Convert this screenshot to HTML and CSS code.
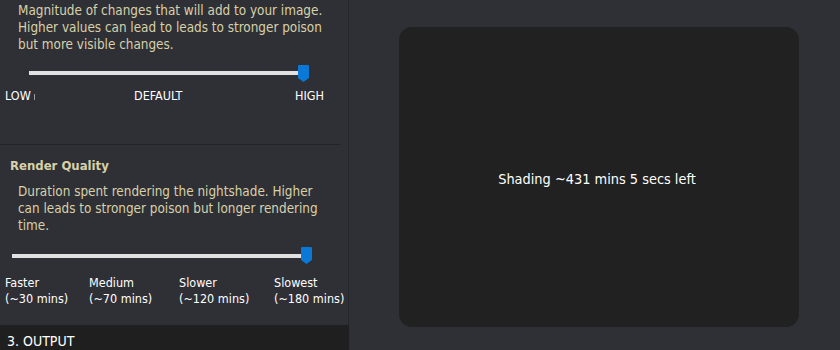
FILE: index.html
```html
<!DOCTYPE html>
<html>
<head>
    <title>Nightshade - Shading</title>
    <link rel="stylesheet" href="styles.css">
</head>
<body>
    <div class="app">
        <div class="side">
            <div class="panel">
                <div class="section intensity">
                    <p class="desc">Magnitude of changes that will add to your image. Higher values can lead to leads to stronger poison but more visible changes.</p>
                    <div class="slider slider-intensity">
                        <div class="track"></div>
                        <svg class="thumb" width="11" height="17" viewBox="0 0 11 17"><path d="M1 0H10Q11 0 11 1V13L5.5 17L0 13V1Q0 0 1 0Z" fill="#0a78d6"/></svg>
                    </div>
                    <div class="marks marks-intensity">
                        <span>LOW<i class="tick"></i></span>
                        <span>DEFAULT</span>
                        <span>HIGH</span>
                    </div>
                </div>
                <div class="section quality">
                    <h3>Render Quality</h3>
                    <p class="desc">Duration spent rendering the nightshade. Higher can leads to stronger poison but longer rendering time.</p>
                    <div class="slider slider-quality">
                        <div class="track"></div>
                        <svg class="thumb" width="11" height="17" viewBox="0 0 11 17"><path d="M1 0H10Q11 0 11 1V13L5.5 17L0 13V1Q0 0 1 0Z" fill="#0a78d6"/></svg>
                    </div>
                    <div class="marks marks-quality">
                        <span>Faster<br>(~30 mins)</span>
                        <span>Medium<br>(~70 mins)</span>
                        <span>Slower<br>(~120 mins)</span>
                        <span>Slowest<br>(~180 mins)</span>
                    </div>
                </div>
            </div>
            <div class="step">3. OUTPUT</div>
        </div>
        <div class="preview">
            <div class="canvas">Shading ~431 mins 5 secs left</div>
        </div>
    </div>
</body>
</html>
```

FILE: styles.css
```css
body {
    margin: 0;
    background: #2f3036;
    font-family: "DejaVu Sans Condensed", "DejaVu Sans", sans-serif;
    font-size: 13px;
    color: #fff;
    overflow: hidden;
}
.app {
    display: flex;
    height: 350px;
}
.side {
    width: 349px;
    display: flex;
    flex-direction: column;
}
.panel {
    height: 327px;
    border-right: 1px solid #26272b;
    overflow: hidden;
}
.section {
    margin-right: 8px;
}
.intensity {
    box-sizing: border-box;
    height: 145px;
    padding-top: 2px;
    border-bottom: 1px solid #232428;
}
.desc {
    margin: 0;
    padding: 0 14px 0 18px;
    font-size: 13.4px;
    line-height: 17px;
    color: #d8d1a9;
}
.quality { padding-top: 12px; }
.quality h3 {
    margin: 0 0 9px 10px;
    font-size: 13px;
    line-height: 17px;
    color: #d8d1a9;
}
.slider {
    position: relative;
    height: 20px;
}
.track {
    position: absolute;
    top: 8px;
    height: 4px;
    background: #e1e1e1;
}
.thumb {
    position: absolute;
    top: 2px;
}
.slider-intensity { margin-top: 10px; }
.slider-intensity .track { left: 29px; width: 272px; }
.slider-intensity .thumb { left: 298px; }
.slider-quality { margin-top: 12px; }
.slider-quality .track { left: 12px; width: 292px; }
.slider-quality .thumb { left: 301px; top: 1px; }
.marks {
    display: grid;
    padding-left: 5px;
    font-size: 12.5px;
    color: #fff;
    white-space: nowrap;
}
.marks-intensity {
    grid-template-columns: 129px 161px auto;
    margin-top: 6px;
    line-height: 14px;
}
.tick {
    display: inline-block;
    width: 1px;
    height: 6px;
    margin-left: 3px;
    background: #9a9a9a;
}
.marks-quality {
    grid-template-columns: 84px 90px 95px auto;
    margin-top: 9px;
    line-height: 16px;
}
.step {
    flex: 1;
    background: #1f1f1f;
    padding: 8px 0 0 7px;
    line-height: 17px;
    font-size: 14px;
}
.preview {
    flex: 1;
    padding: 27px 41px 23px 50px;
}
.canvas {
    box-sizing: border-box;
    height: 300px;
    border-radius: 13px;
    background: #212121;
    display: flex;
    align-items: center;
    justify-content: center;
    font-size: 14.4px;
    padding: 4px 4px 0 0;
}
```
